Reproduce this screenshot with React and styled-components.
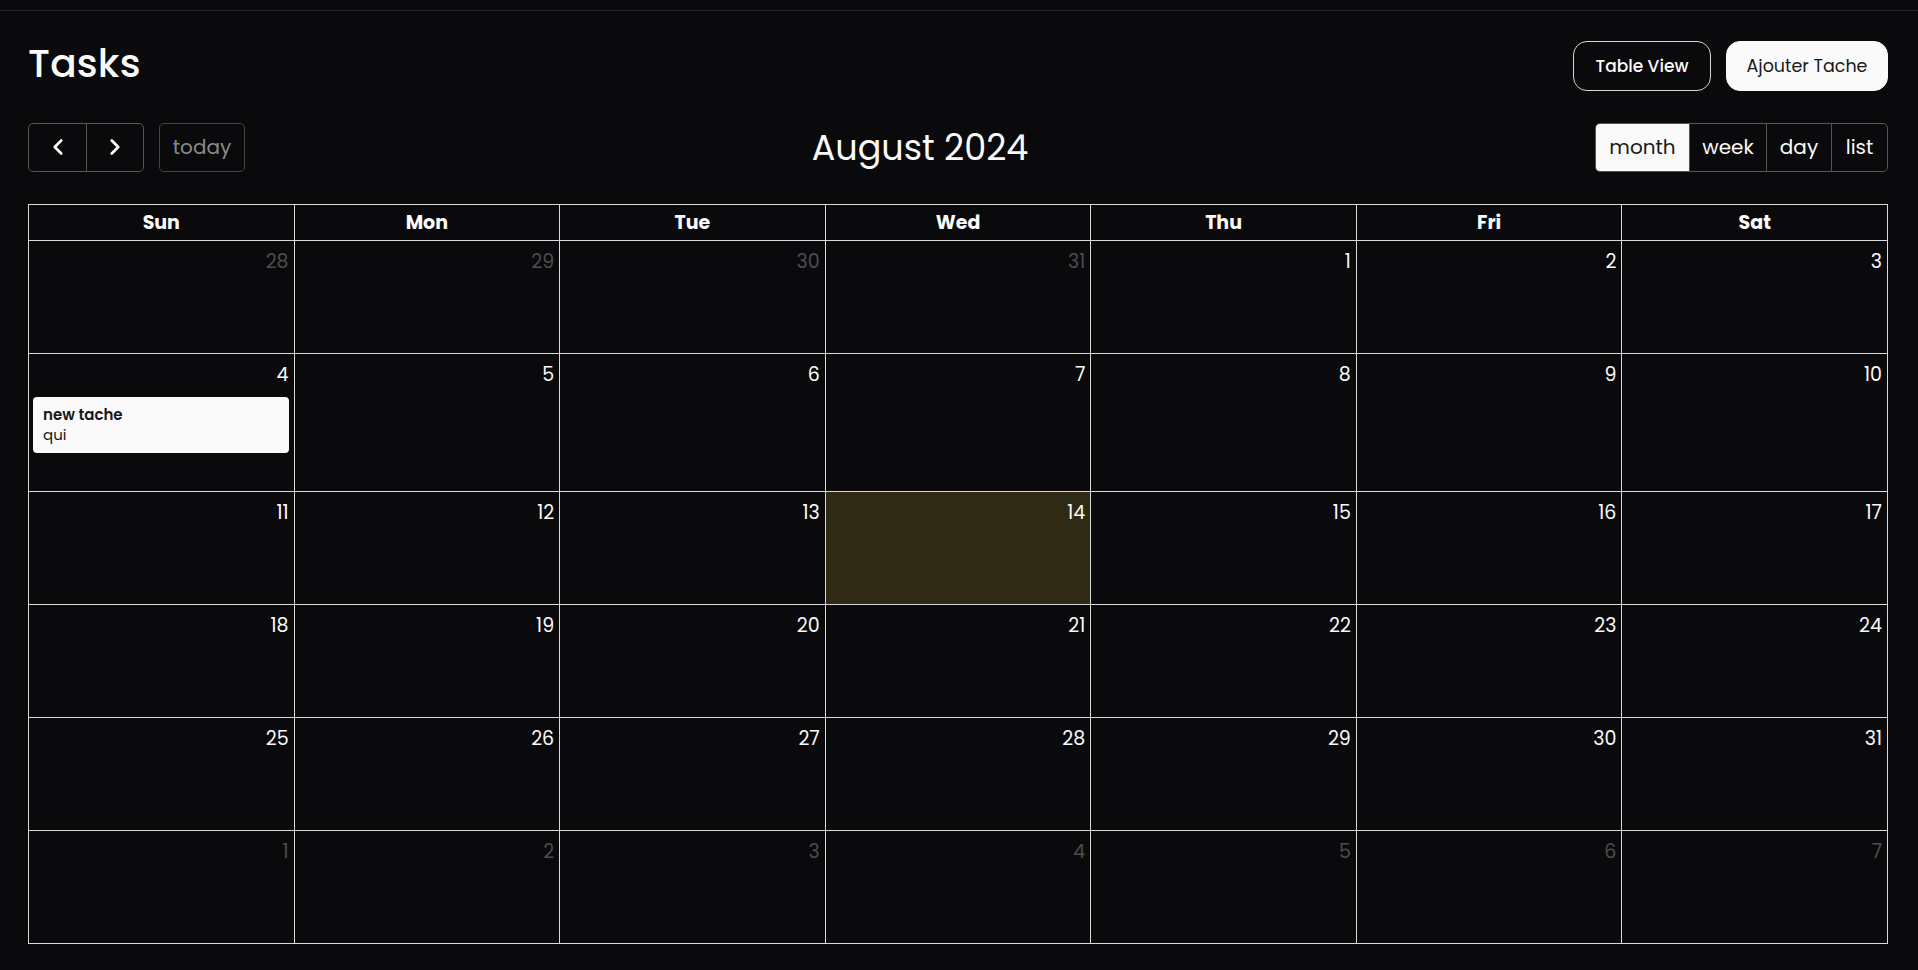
import React from "react";
import styled, { createGlobalStyle } from "styled-components";
import { ChevronLeft, ChevronRight } from "lucide-react";

const GlobalStyle = createGlobalStyle`
  html, body { margin: 0; padding: 0; background: #0a0a0c; }
  body { font-family: "Poppins", Inter, "Noto Sans", sans-serif; color: #fafafa; }
  * { box-sizing: border-box; }
`;

const TopBar = styled.div`
  height: 11px;
  border-bottom: 1px solid #27272a;
`;

const Main = styled.main`
  padding: 30px 30px 0 28px;
`;

const HeaderRow = styled.div`
  display: flex;
  align-items: center;
  justify-content: space-between;
  height: 50px;
`;

const Title = styled.h1`
  margin: 0 0 6px 0;
  font-size: 39px;
  font-weight: 500;
  letter-spacing: 0.2px;
  color: #fafafa;
`;

const Actions = styled.div`
  display: flex;
  gap: 15px;
`;

const PillButton = styled.button`
  height: 50px;
  width: ${(p) => p.$w}px;
  border-radius: 14px;
  font-family: inherit;
  font-size: ${(p) => (p.$solid ? 17.5 : 17)}px;
  cursor: pointer;
  border: 1px solid ${(p) => (p.$solid ? "#fafafa" : "#d4d4d4")};
  background: ${(p) => (p.$solid ? "#fafafa" : "transparent")};
  color: ${(p) => (p.$solid ? "#18181b" : "#fafafa")};
  font-weight: ${(p) => (p.$solid ? 400 : 500)};
`;

const Toolbar = styled.div`
  display: flex;
  align-items: center;
  justify-content: space-between;
  margin-top: 31px;
  height: 50px;
`;

const ToolChunk = styled.div`
  display: flex;
  align-items: center;
  gap: 15px;
`;

const Group = styled.div`
  display: flex;
  border: 1px solid #555;
  border-radius: 5px;
  overflow: hidden;
  height: 49px;
`;

const NavButton = styled.button`
  width: 57px;
  height: 100%;
  display: flex;
  align-items: center;
  justify-content: center;
  background: transparent;
  border: none;
  color: #fafafa;
  padding: 0;
  & + & { border-left: 1px solid #555; }
`;

const TodayButton = styled.button`
  width: 86px;
  height: 49px;
  border: 1px solid #444;
  border-radius: 5px;
  background: transparent;
  color: #8a8a8a;
  font-family: inherit;
  font-size: 20px;
`;

const MonthTitle = styled.h2`
  margin: 0;
  font-size: 35px;
  font-weight: 400;
  color: #fafafa;
`;

const ViewButton = styled.button`
  width: ${(p) => p.$w}px;
  height: 100%;
  border: none;
  font-family: inherit;
  font-size: 20px;
  padding: 0;
  background: ${(p) => (p.$active ? "#fafafa" : "transparent")};
  color: ${(p) => (p.$active ? "#18181b" : "#fafafa")};
  & + & { border-left: 1px solid #555; }
`;

const Calendar = styled.div`
  margin-top: 32px;
  display: grid;
  grid-template-columns: repeat(7, 1fr);
  border-top: 1px solid #d9d9d9;
  border-left: 1px solid #d9d9d9;
`;

const HeadCell = styled.div`
  height: 36px;
  display: flex;
  align-items: center;
  justify-content: center;
  font-size: 19px;
  font-weight: 700;
  border-right: 1px solid #d9d9d9;
  border-bottom: 1px solid #d9d9d9;
`;

const DayCell = styled.div`
  min-height: 113px;
  padding: 7px 5px 0 4px;
  border-right: 1px solid #d9d9d9;
  border-bottom: 1px solid #d9d9d9;
  background: ${(p) => (p.$today ? "#2f2a14" : "transparent")};
  display: flex;
  flex-direction: column;
`;

const DayNum = styled.div`
  text-align: right;
  font-size: 19px;
  line-height: 28px;
  color: ${(p) => (p.$other ? "#4d4d4f" : "#fafafa")};
`;

const Events = styled.div`
  margin-top: 8px;
  padding-bottom: 38px;
`;

const EventCard = styled.div`
  background: #fafafa;
  border-radius: 4px;
  padding: 8px 10px 8px;
  color: #18181b;
  font-size: 15px;
  line-height: 20px;
`;

const EventTitle = styled.div`
  font-weight: 600;
`;

const days = ["Sun", "Mon", "Tue", "Wed", "Thu", "Fri", "Sat"];

const buildCells = () => {
  const cells = [];
  [28, 29, 30, 31].forEach((d) => cells.push({ d, other: true }));
  for (let d = 1; d <= 31; d++) cells.push({ d, other: false });
  for (let d = 1; d <= 7; d++) cells.push({ d, other: true });
  return cells;
};

export default function App() {
  const cells = buildCells();
  return (
    <>
      <GlobalStyle />
      <TopBar />
      <Main>
        <HeaderRow>
          <Title>Tasks</Title>
          <Actions>
            <PillButton $w={138}>Table View</PillButton>
            <PillButton $w={162} $solid>
              Ajouter Tache
            </PillButton>
          </Actions>
        </HeaderRow>
        <Toolbar>
          <ToolChunk>
            <Group>
              <NavButton aria-label="prev">
                <ChevronLeft size={26} strokeWidth={2.5} />
              </NavButton>
              <NavButton aria-label="next">
                <ChevronRight size={26} strokeWidth={2.5} />
              </NavButton>
            </Group>
            <TodayButton>today</TodayButton>
          </ToolChunk>
          <MonthTitle>August 2024</MonthTitle>
          <Group>
            <ViewButton $w={93} $active>
              month
            </ViewButton>
            <ViewButton $w={77}>week</ViewButton>
            <ViewButton $w={65}>day</ViewButton>
            <ViewButton $w={56}>list</ViewButton>
          </Group>
        </Toolbar>
        <Calendar>
          {days.map((d) => (
            <HeadCell key={d}>{d}</HeadCell>
          ))}
          {cells.map((c, i) => (
            <DayCell key={i} $today={!c.other && c.d === 14}>
              <DayNum $other={c.other}>{c.d}</DayNum>
              {!c.other && c.d === 4 && (
                <Events>
                  <EventCard>
                    <EventTitle>new tache</EventTitle>
                    <div>qui</div>
                  </EventCard>
                </Events>
              )}
            </DayCell>
          ))}
        </Calendar>
      </Main>
    </>
  );
}
